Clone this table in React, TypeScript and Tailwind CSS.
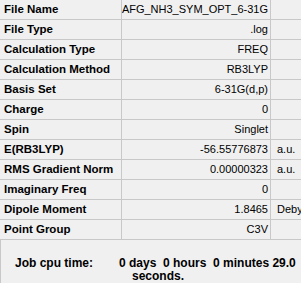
import React from 'react';

type Row = { label: string; value: string; unit?: string };

const rows: Row[] = [
  { label: 'File Name', value: 'AFG_NH3_SYM_OPT_6-31G' },
  { label: 'File Type', value: '.log' },
  { label: 'Calculation Type', value: 'FREQ' },
  { label: 'Calculation Method', value: 'RB3LYP' },
  { label: 'Basis Set', value: '6-31G(d,p)' },
  { label: 'Charge', value: '0' },
  { label: 'Spin', value: 'Singlet' },
  { label: 'E(RB3LYP)', value: '-56.55776873', unit: 'a.u.' },
  { label: 'RMS Gradient Norm', value: '0.00000323', unit: 'a.u.' },
  { label: 'Imaginary Freq', value: '0' },
  { label: 'Dipole Moment', value: '1.8465', unit: 'Debye' },
  { label: 'Point Group', value: 'C3V' },
];

export default function App() {
  return (
    <div
      className="w-[301px] h-[283px] overflow-hidden bg-[#f0f0f0] text-[11px] leading-none text-black"
      style={{ fontFamily: '"Liberation Sans", Arial, sans-serif' }}
    >
      <div className="flex flex-col">
        {rows.map((r) => (
          <div key={r.label} className="flex h-[20px] border-b border-[#c8c8c8]">
            <div className="w-[122px] shrink-0 border-r border-[#c8c8c8] pl-[4px] flex items-center font-bold text-[11.5px] whitespace-nowrap">
              {r.label}
            </div>
            <div className="w-[149px] shrink-0 border-r border-[#c8c8c8] pr-[2px] flex items-center justify-end whitespace-nowrap">
              {r.value}
            </div>
            <div className="flex-1 pl-[6px] flex items-center whitespace-nowrap overflow-hidden">
              {r.unit ?? ''}
            </div>
          </div>
        ))}
      </div>

      {/* job time footer */}
      <div className="h-[43px] border-l border-[#c8c8c8] pt-[17px] font-bold text-[12px] flex whitespace-nowrap">
        <div className="w-[118px] pl-[14px] shrink-0">Job cpu time:</div>
        <div className="flex flex-col gap-[1px]">
          <div>0 days&nbsp; 0 hours&nbsp; 0 minutes 29.0</div>
          <div className="pl-[13px]">seconds.</div>
        </div>
      </div>
    </div>
  );
}
